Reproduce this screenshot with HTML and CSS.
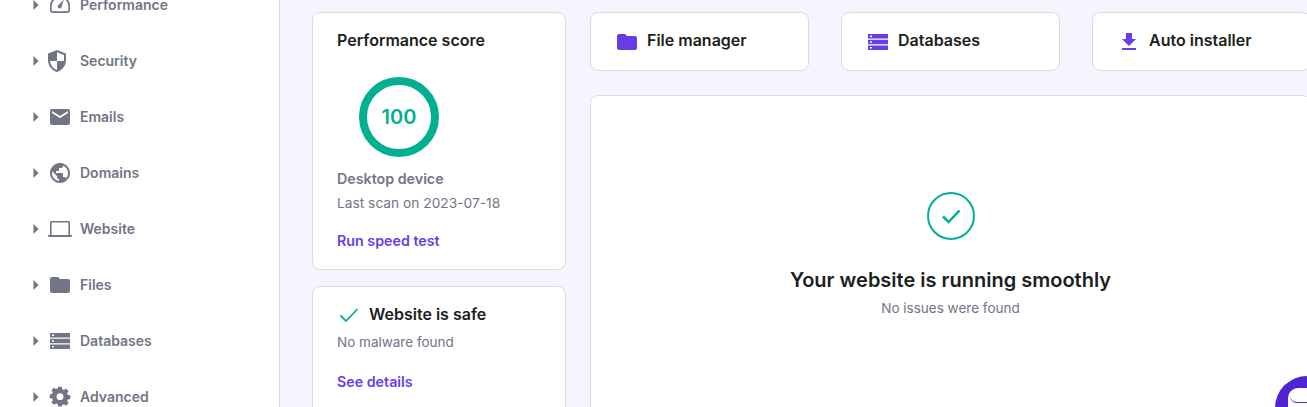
FILE: index.html
```html
<!DOCTYPE html>
<html lang="en">
<head>
<meta charset="utf-8">
<title>Website dashboard</title>
<link rel="stylesheet" href="styles.css">
</head>
<body>
<div class="page">
  <nav class="sidebar">
    <div class="nav-item"><svg class="caret" viewBox="0 0 6 10"><path d="M0.500 0L5.500 5L0.500 10Z"/></svg><svg class="nav-icon" viewBox="0 0 24 24"><path fill-rule="evenodd" d="M12 3A10 10 0 0 0 2 13v4a3 3 0 0 0 3 3h14a3 3 0 0 0 3-3v-4A10 10 0 0 0 12 3zm0 1.700A8.300 8.300 0 0 1 20.300 13v4a1.300 1.300 0 0 1-1.300 1.300H5A1.300 1.300 0 0 1 3.700 17v-4A8.300 8.300 0 0 1 12 4.700z"/><path d="M16 6.500l-2.300 6.800a2 2 0 1 1-3-1.600z"/></svg><span>Performance</span></div>
    <div class="nav-item"><svg class="caret" viewBox="0 0 6 10"><path d="M0.500 0L5.500 5L0.500 10Z"/></svg><svg class="nav-icon" viewBox="0 0 24 24"><path fill-rule="evenodd" d="M9 1l9 3.500v6.500c0 5.600-3.800 10.600-9 12-5.200-1.400-9-6.400-9-12V4.500zM9 3.200V12H2c.5 4.200 3.300 7.700 7 8.900V12h7V5.900z"/></svg><span>Security</span></div>
    <div class="nav-item"><svg class="caret" viewBox="0 0 6 10"><path d="M0.500 0L5.500 5L0.500 10Z"/></svg><svg class="nav-icon" viewBox="0 0 24 24"><path d="M20 4H4c-1.100 0-1.990.9-1.990 2L2 18c0 1.100.9 2 2 2h16c1.100 0 2-.9 2-2V6c0-1.100-.9-2-2-2zm0 4l-8 5-8-5V6l8 5 8-5v2z"/></svg><span>Emails</span></div>
    <div class="nav-item"><svg class="caret" viewBox="0 0 6 10"><path d="M0.500 0L5.500 5L0.500 10Z"/></svg><svg class="nav-icon" viewBox="0 0 24 24"><path d="M12 2C6.480 2 2 6.480 2 12s4.480 10 10 10 10-4.480 10-10S17.520 2 12 2zm-1 17.930c-3.950-.49-7-3.850-7-7.930 0-.62.08-1.210.21-1.790L9 15v1c0 1.100.9 2 2 2v1.930zm6.900-2.540c-.26-.81-1-1.390-1.900-1.390h-1v-3c0-.55-.45-1-1-1H8v-2h2c.55 0 1-.45 1-1V7h2c1.100 0 2-.9 2-2v-.41c2.930 1.190 5 4.060 5 7.410 0 2.080-.8 3.970-2.100 5.390z"/></svg><span>Domains</span></div>
    <div class="nav-item"><svg class="caret" viewBox="0 0 6 10"><path d="M0.500 0L5.500 5L0.500 10Z"/></svg><svg class="nav-icon" viewBox="0 0 24 24"><path fill-rule="evenodd" d="M3.500 4h17A1.500 1.500 0 0 1 22 5.500V18h2v.5a1.500 1.500 0 0 1-1.500 1.500h-21A1.500 1.500 0 0 1 0 18.500V18h2V5.500A1.500 1.500 0 0 1 3.500 4zm.1 1.600V18h16.800V5.600z"/></svg><span>Website</span></div>
    <div class="nav-item"><svg class="caret" viewBox="0 0 6 10"><path d="M0.500 0L5.500 5L0.500 10Z"/></svg><svg class="nav-icon" viewBox="0 0 24 24"><path d="M10 4H4c-1.100 0-2 .9-2 2v12c0 1.100.9 2 2 2h16c1.100 0 2-.9 2-2V8c0-1.100-.9-2-2-2h-8l-2-2z"/></svg><span>Files</span></div>
    <div class="nav-item"><svg class="caret" viewBox="0 0 6 10"><path d="M0.500 0L5.500 5L0.500 10Z"/></svg><svg class="nav-icon" viewBox="0 0 24 24"><path fill-rule="evenodd" d="M2 4h20v4.500H2zm2 1.500V7h2V5.500zM2 9.800h20v4.400H2zm2 1.400v1.600h2v-1.600zM2 15.500h20V20H2zm2 1.500v1.500h2V17z"/></svg><span>Databases</span></div>
    <div class="nav-item"><svg class="caret" viewBox="0 0 6 10"><path d="M0.500 0L5.500 5L0.500 10Z"/></svg><svg class="nav-icon" viewBox="0 0 24 24"><path fill-rule="evenodd" d="M10 2h4l.5 2.700 1.900.8 2.300-1.500 2.800 2.800-1.500 2.300.8 1.900 2.700.5v4l-2.700.5-.8 1.900 1.500 2.300-2.800 2.800-2.300-1.500-1.900.8L14 24h-4l-.5-2.700-1.900-.8-2.300 1.500-2.800-2.800L4 16.900l-.8-1.900L.5 14.500v-4l2.700-.5.8-1.900L2.500 5.800l2.800-2.800 2.300 1.500 1.900-.8zM12 9.200a3.800 3.800 0 1 0 0 7.600 3.800 3.800 0 0 0 0-7.600z" transform="translate(1.200 .0) scale(.9)"/></svg><span>Advanced</span></div>
  </nav>
  <main class="content">
    <section class="left-col">
      <article class="card score-card">
        <h2 class="card-title">Performance score</h2>
        <div class="ring"><span>100</span></div>
        <div class="device">Desktop device</div>
        <div class="muted scan">Last scan on 2023-07-18</div>
        <a class="link">Run speed test</a>
      </article>
      <article class="card safe-card">
        <div class="safe-head">
          <svg class="safe-check" viewBox="0 0 20 16"><path d="M1.500 8.500L7 14L18.500 2" fill="none" stroke="#00b090" stroke-width="1.800"/></svg>
          <h2 class="card-title">Website is safe</h2>
        </div>
        <div class="muted safe-text">No malware found</div>
        <a class="link">See details</a>
      </article>
    </section>
    <section class="right-col">
      <div class="tiles">
        <div class="tile"><svg class="tile-icon" viewBox="0 0 24 24"><path d="M10 4H4c-1.100 0-2 .9-2 2v12c0 1.100.9 2 2 2h16c1.100 0 2-.9 2-2V8c0-1.100-.9-2-2-2h-8l-2-2z"/></svg><span>File manager</span></div>
        <div class="tile"><svg class="tile-icon" viewBox="0 0 24 24"><path fill-rule="evenodd" d="M2 4h20v4.500H2zm2 1.500V7h2V5.500zM2 9.800h20v4.400H2zm2 1.400v1.600h2v-1.600zM2 15.500h20V20H2zm2 1.500v1.500h2V17z"/></svg><span>Databases</span></div>
        <div class="tile"><svg class="tile-icon" viewBox="0 0 24 24"><path d="M19 9h-4V3H9v6H5l7 7 7-7zM5 18v2h14v-2H5z"/></svg><span>Auto installer</span></div>
      </div>
      <div class="card status-card">
        <svg class="status-icon" viewBox="0 0 48 48"><circle cx="24" cy="24" r="23" fill="none" stroke="#00b090" stroke-width="2"/><path d="M16 24.500l5.500 5.500 11-11.500" fill="none" stroke="#00b090" stroke-width="2.500"/></svg>
        <h1 class="status-title">Your website is running smoothly</h1>
        <div class="muted">No issues were found</div>
      </div>
    </section>
  </main>
</div>
<div class="chat"><span class="chat-inner"><span class="chat-smile"></span></span></div>
</body>
</html>
```
FILE: styles.css
```css
* { box-sizing: border-box; }
html, body { margin: 0; height: 100%; overflow: hidden; }
body {
  background: #f4f5ff;
  color: #1d1e20;
  font-family: "Inter", "Noto Sans", "Liberation Sans", sans-serif;
  font-size: 14px;
}
.page { display: flex; height: 407px; overflow: hidden; }
.sidebar {
  flex: 0 0 280px;
  height: 460px;
  margin-top: -23px;
  padding-left: 33px;
  background: #fff;
  border-right: 1px solid #d8dae0;
}
.nav-item {
  display: flex;
  align-items: center;
  height: 56px;
  color: #727586;
  font-size: 14px;
  font-weight: 600;
}
.nav-item span { padding-bottom: 2px; }
.caret { width: 6px; height: 10px; fill: #727586; margin-right: 9px; flex: none; }
.nav-icon { width: 24px; height: 24px; fill: #727586; margin-right: 8px; flex: none; }
.content { display: flex; align-items: flex-start; gap: 24px; padding: 12px 0 0 32px; }
.left-col { display: flex; flex-direction: column; gap: 16px; width: 254px; flex: none; }
.right-col { display: flex; flex-direction: column; gap: 24px; width: 721px; flex: none; }
.card { background: #fff; border: 1px solid #dadce0; border-radius: 8px; }
.card-title { margin: 0 0 2px; font-size: 16px; line-height: 22px; font-weight: 600; }
.score-card { height: 258px; padding: 16px 24px; }
.ring {
  display: flex;
  align-items: center;
  justify-content: center;
  width: 80px;
  height: 80px;
  margin: 26px 0 0 22px;
  border: 8px solid #00b090;
  border-radius: 50%;
  color: #00b090;
  font-size: 20px;
  font-weight: 600;
}
.device { margin-top: 10px; color: #727586; font-weight: 600; font-size: 14.25px; line-height: 24px; }
.muted { color: #727586; font-size: 13.5px; line-height: 24px; }
.link { display: block; color: #673de6; font-size: 14.25px; font-weight: 600; line-height: 24px; }
.scan { margin-bottom: 14px; font-size: 13.75px; }
.safe-card { height: 140px; padding: 16px 24px; }
.safe-head { display: flex; align-items: center; gap: 10px; padding-left: 2px; margin-bottom: 3px; }
.safe-check { width: 20px; height: 16px; flex: none; }
.safe-text { margin-bottom: 16px; }
.tiles { display: flex; gap: 32px; }
.tile {
  display: flex;
  align-items: center;
  flex: 0 0 219px;
  height: 59px;
  padding: 0 0 1px 24px;
  background: #fff;
  border: 1px solid #dadce0;
  border-radius: 8px;
  font-size: 16px;
  font-weight: 600;
}
.tile span { padding-bottom: 2px; }
.tile-icon { width: 24px; height: 24px; fill: #673de6; margin: 1px 8px 0 0; flex: none; }
.status-card {
  display: flex;
  flex-direction: column;
  align-items: center;
  height: 400px;
  padding-top: 96px;
}
.status-icon { width: 48px; height: 48px; margin-bottom: 24px; }
.status-title { margin: 0; font-size: 20px; line-height: 32px; font-weight: 600; }
.chat {
  position: absolute;
  left: 1275px;
  top: 376px;
  width: 64px;
  height: 64px;
  border-radius: 50%;
  background: #5025d1;
}
.chat-inner {
  position: absolute;
  left: 13px;
  top: 12px;
  width: 38px;
  height: 38px;
  border-radius: 10px;
  background: #fff;
}
.chat-smile {
  position: absolute;
  left: 2px;
  top: 8px;
  width: 34px;
  height: 7px;
  border-bottom: 1px solid #5025d1;
  border-radius: 0 0 17px 17px;
}
```
